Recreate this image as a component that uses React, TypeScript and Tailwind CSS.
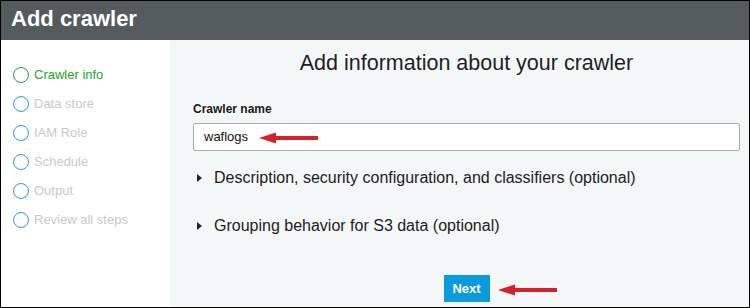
import React from "react";

const steps = [
  { label: "Crawler info", active: true },
  { label: "Data store", active: false },
  { label: "IAM Role", active: false },
  { label: "Schedule", active: false },
  { label: "Output", active: false },
  { label: "Review all steps", active: false },
];

const sections = [
  "Description, security configuration, and classifiers (optional)",
  "Grouping behavior for S3 data (optional)",
];

const RedArrow = () => (
  <svg width="60" height="12" viewBox="0 0 60 12">
    <polygon points="0,6 17,0.5 17,11.5" fill="#d3222a" />
    <rect x="16" y="4" width="43" height="4" fill="#d3222a" />
  </svg>
);

const App = () => {
  return (
    <div
      className="w-[750px] h-[308px] border border-black flex flex-col overflow-hidden"
      style={{ fontFamily: '"Liberation Sans", Arial, sans-serif' }}
    >
      {/* Header */}
      <div className="h-[39px] bg-[#545b5e] flex items-center pl-[10px] shrink-0">
        <h1 className="text-[22px] font-bold text-white leading-none -mt-[4px]">Add crawler</h1>
      </div>

      <div className="flex flex-1">
        {/* Steps */}
        <div className="w-[169px] bg-white pt-[20px] pl-[12px]">
          {steps.map((s) => (
            <div key={s.label} className="flex items-center h-[29px]">
              <span
                className={
                  "w-[16px] h-[16px] rounded-full border-[1.5px] mr-[5px] " +
                  (s.active ? "border-[#1ea32f]" : "border-[#1f9fe0]")
                }
              />
              <span className={"text-[13px] " + (s.active ? "text-[#1ea32f]" : "text-[#c9c9c9]")}>
                {s.label}
              </span>
            </div>
          ))}
        </div>

        {/* Main */}
        <div className="flex-1 bg-[#f4f7f8] pl-[23px] pr-[9px] pt-[11px]">
          <h2 className="text-center text-[21.5px] text-[#1f1f1f] leading-[25px]">
            Add information about your crawler
          </h2>

          <div className="mt-[26px] text-[12px] font-bold text-[#1a1a1a] leading-[14px]">Crawler name</div>
          <div className="relative mt-[7px]">
            <div className="h-[28px] bg-white border border-[#a9adae] rounded-[2px] flex items-center pl-[10px] text-[13px] text-[#111]">
              waflogs
            </div>
            <div className="absolute left-[66px] top-[9px] flex">
              <RedArrow />
            </div>
          </div>

          <div className="mt-[18px] flex flex-col gap-[30px]">
            {sections.map((t) => (
              <div key={t} className="flex items-center h-[18px]">
                <svg width="5" height="8" viewBox="0 0 5 8" className="ml-[4px] mr-[12px]">
                  <polygon points="0,0 5,4 0,8" fill="#222" />
                </svg>
                <span className="text-[16px] text-[#1c1c1c]">{t}</span>
              </div>
            ))}
          </div>

          <div className="mt-[40px] flex items-center justify-center pl-[68px]">
            <button className="w-[46px] h-[27px] bg-[#0b9adb] text-white text-[13px] font-bold">Next</button>
            <div className="ml-[8px] mt-[2px] flex">
              <RedArrow />
            </div>
          </div>
        </div>
      </div>
    </div>
  );
};

export default App;
